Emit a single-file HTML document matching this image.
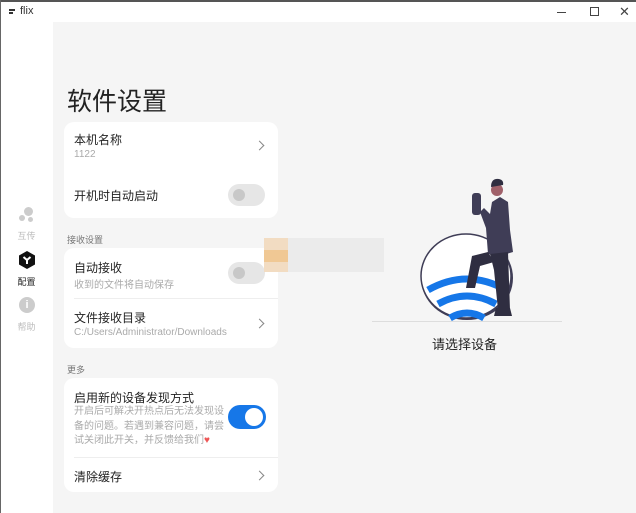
<!DOCTYPE html>
<html><head><meta charset="utf-8"><style>
*{margin:0;padding:0;box-sizing:border-box}
body{width:636px;height:513px;overflow:hidden;background:#fff;font-family:"Liberation Sans","Noto Sans CJK SC",sans-serif;position:relative;color:#222}
.abs{position:absolute}
.top{left:0;top:0;width:636px;height:2px;background:#555}
.left{left:0;top:0;width:1px;height:513px;background:#666}
.main{left:53px;top:22px;width:583px;height:491px;background:#f5f5f5}
.card{position:absolute;left:64px;width:214px;background:#fff;border-radius:10px}
.t{position:absolute;font-size:12px;color:#222;white-space:nowrap}
.s{position:absolute;font-size:10px;color:#aaa;white-space:nowrap}
.chev{position:absolute;width:7px;height:7px;border-right:1.5px solid #888;border-top:1.5px solid #888;transform:rotate(45deg)}
.tog{position:absolute;width:37px;height:22px;border-radius:11px;background:#e6e6e6}
.tog i{position:absolute;left:5px;top:5px;width:12px;height:12px;border-radius:50%;background:#c8c8c8}
.sb{position:absolute;font-size:9px;color:#bbb;width:53px;text-align:center;left:0}
</style></head><body>
<div class="abs top"></div><div class="abs left"></div>
<div class="abs" style="left:9px;top:9px;width:6px;height:1.5px;background:#333"></div>
<div class="abs" style="left:9px;top:12px;width:4px;height:1.5px;background:#333"></div>
<div class="abs" style="left:20px;top:5px;font-size:11px;color:#333">flix</div>
<div class="abs" style="left:557px;top:12px;width:9px;height:1px;background:#444"></div>
<div class="abs" style="left:590px;top:7px;width:9px;height:9px;border:1px solid #444"></div>
<div class="abs" style="left:619px;top:4px;font-size:13px;color:#444">✕</div>
<div class="abs main"></div>

<div class="abs" style="left:67px;top:82px;font-size:25px;color:#222">软件设置</div>

<div class="card" style="top:122px;height:96px"></div>
<div class="t" style="left:74px;top:131px">本机名称</div>
<div class="s" style="left:74px;top:149px">1122</div>
<div class="chev" style="left:256px;top:142px"></div>
<div class="t" style="left:74px;top:187px">开机时自动启动</div>
<div class="tog" style="left:228px;top:184px"><i></i></div>

<div class="s" style="left:67px;top:233px;color:#777;font-size:9px">接收设置</div>
<div class="card" style="top:248px;height:100px"></div>
<div class="t" style="left:74px;top:259px">自动接收</div>
<div class="s" style="left:74px;top:276px">收到的文件将自动保存</div>
<div class="tog" style="left:228px;top:262px"><i></i></div>
<div class="abs" style="left:74px;top:298px;width:204px;height:1px;background:#eee"></div>
<div class="t" style="left:74px;top:309px">文件接收目录</div>
<div class="s" style="left:74px;top:327px">C:/Users/Administrator/Downloads</div>
<div class="chev" style="left:256px;top:320px"></div>

<div class="s" style="left:67px;top:363px;color:#777;font-size:9px">更多</div>
<div class="card" style="top:378px;height:114px"></div>
<div class="t" style="left:74px;top:389px">启用新的设备发现方式</div>
<div class="s" style="left:74px;top:405px;line-height:14.5px;white-space:normal;width:152px">开启后可解决开热点后无法发现设备的问题。若遇到兼容问题，请尝试关闭此开关，并反馈给我们<span style="color:#e55">♥</span></div>
<div class="tog" style="left:228px;top:405px;background:#1677e8;width:38px;height:24px;border-radius:12px"><i style="left:17px;top:3px;width:18px;height:18px;background:#fff"></i></div>
<div class="abs" style="left:74px;top:457px;width:204px;height:1px;background:#eee"></div>
<div class="t" style="left:74px;top:468px">清除缓存</div>
<div class="chev" style="left:256px;top:472px"></div>

<!-- blurred region -->
<div class="abs" style="left:276px;top:238px;width:108px;height:34px;background:#ebebeb"></div>
<div class="abs" style="left:264px;top:238px;width:24px;height:34px;background:#f2dcc2"></div>
<div class="abs" style="left:264px;top:250px;width:24px;height:12px;background:#f0c894"></div>

<!-- sidebar -->
<div class="abs" style="left:24px;top:207px;width:9px;height:9px;border-radius:50%;background:#ccc"></div>
<div class="abs" style="left:19px;top:215px;width:6px;height:6px;border-radius:50%;background:#ccc"></div>
<div class="abs" style="left:28px;top:217px;width:5px;height:5px;border-radius:50%;background:#ccc"></div>
<div class="sb" style="top:229px">互传</div>
<svg class="abs" style="left:18px;top:251px" width="18" height="18" viewBox="0 0 18 18"><polygon points="9,0 17,4.5 17,13.5 9,18 1,13.5 1,4.5" fill="#111"/><path d="M5.5 6 L9 9 L12.5 6 M9 9 V13" stroke="#fff" stroke-width="2" fill="none"/></svg>
<div class="sb" style="top:275px;color:#222">配置</div>
<div class="abs" style="left:19px;top:297px;width:16px;height:16px;border-radius:50%;background:#ccc;color:#fff;font-size:11px;font-weight:bold;text-align:center;line-height:16px">i</div>
<div class="sb" style="top:320px">帮助</div>

<!-- illustration -->
<svg class="abs" style="left:370px;top:170px" width="200" height="151" viewBox="0 0 200 151">
<ellipse cx="97" cy="108" rx="46" ry="42" fill="#3f3d56"/>
<ellipse cx="96" cy="106" rx="45" ry="42" fill="#fff" stroke="#3f3d56" stroke-width="1.5"/>
<path d="M58 120 Q97 98 136 120" stroke="#1677e8" stroke-width="7" fill="none"/>
<path d="M68 134 Q97 118 126 134" stroke="#1677e8" stroke-width="7" fill="none"/>
<path d="M80 148 Q97 138 114 148" stroke="#1677e8" stroke-width="7" fill="none"/>
<rect x="102" y="23" width="9" height="22" rx="3" fill="#3f3d56"/>
<circle cx="127" cy="20" r="6" fill="#a0616a"/>
<path d="M121 17 q0 -9 8 -8 q5 1 4 6 l-12 2z" fill="#2f2e41"/>
<path d="M110 42 L114 38 L120 44 L122 32 L130 27 L138 32 L140 60 L143 82 L130 86 L118 84 L116 58 Z" fill="#3f3d56"/>
<path d="M118 82 L102 86 L96 118 L105 118 L110 96 L124 92 Z" fill="#2f2e41"/>
<path d="M120 84 L138 82 L140 140 L128 140 L124 100 Z" fill="#2f2e41"/>
<path d="M126 138 L140 138 L142 146 L124 146 Z" fill="#2f2e41"/>
</svg>
<div class="abs" style="left:372px;top:321px;width:190px;height:1px;background:#ddd"></div>
<div class="abs" style="left:432px;top:334px;font-size:13px;color:#222">请选择设备</div>
</body></html>
